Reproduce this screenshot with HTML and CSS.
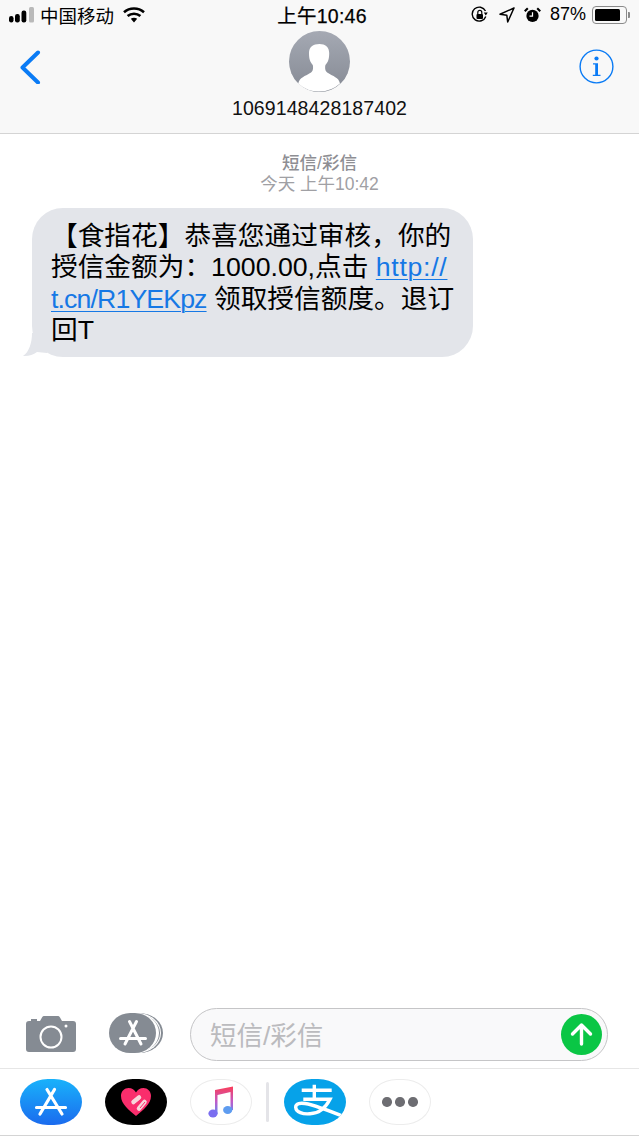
FILE: index.html
```html
<!DOCTYPE html>
<html lang="zh">
<head>
<meta charset="utf-8">
<title>短信/彩信</title>
<link rel="stylesheet" href="styles.css">
</head>
<body>
<div class="screen">
  <header class="top">
    <div class="status">
      <div class="status-left">
        <svg class="signal" width="25" height="16" viewBox="0 0 25 16"><rect x="0" y="9" width="4.500" height="6.500" rx="2.200" fill="#000"/><rect x="6" y="7" width="4.800" height="8.500" rx="2.200" fill="#000"/><rect x="12.500" y="3.500" width="4.800" height="12" rx="2.200" fill="#000"/><rect x="20" y="0" width="5" height="15.500" rx="1.500" fill="#b9b9b9"/></svg>
        <span class="carrier">中国移动</span>
        <svg class="wifi" width="22" height="16" viewBox="0 0 22 16"><path d="M1 5.200C6.600.3 15.400.3 21 5.200" fill="none" stroke="#000" stroke-width="2.600"/><path d="M4.600 9C8.300 5.900 13.700 5.900 17.400 9" fill="none" stroke="#000" stroke-width="2.600"/><path d="M7.800 11.800 11 15.500l3.200-3.700c-1.900-1.400-4.500-1.400-6.400 0z" fill="#000"/></svg>
      </div>
      <div class="clock">上午10:46</div>
      <div class="status-right">
        <svg width="18" height="18" viewBox="0 0 18 18"><path d="M14.800 10.500A7 7 0 1 1 14.500 5" fill="none" stroke="#000" stroke-width="1.400"/><path d="M12.800 6.500h4L14.800 9.500z" fill="#000"/><rect x="5.500" y="8" width="6.500" height="5" rx="1" fill="#000"/><path d="M6.800 8V6.400a2 2 0 0 1 4 0V8" fill="none" stroke="#000" stroke-width="1.200"/></svg>
        <svg class="loc" width="16" height="16" viewBox="0 0 16 16"><path d="M15 1 1 7.300 7.800 8.200 8.700 15z" fill="none" stroke="#000" stroke-width="1.500" stroke-linejoin="round"/></svg>
        <svg class="alarm" width="17" height="18" viewBox="0 0 18 18"><circle cx="9" cy="10" r="6.500" fill="#000"/><path d="M9 6v4.300H5.800" fill="none" stroke="#fff" stroke-width="1.300"/><path d="M.8 5 4 1.800M17.200 5 14 1.800" stroke="#000" stroke-width="2.200"/></svg>
        <span class="percent">87%</span>
        <div class="battery"><div class="battery-fill"></div></div>
        <div class="battery-tip"></div>
      </div>
    </div>
    <div class="nav">
      <svg class="back" width="22" height="34" viewBox="0 0 22 34"><path d="M19 2.500 3.500 17.500 19 32.500" fill="none" stroke="#0a7bf5" stroke-width="4" stroke-linecap="round" stroke-linejoin="round"/></svg>
      <div class="contact">
        <svg class="avatar" width="61" height="61" viewBox="0 0 61 61">
          <defs><linearGradient id="ag" x1="0" y1="0" x2="0" y2="1"><stop offset="0" stop-color="#a5a9b3"/><stop offset="1" stop-color="#858a94"/></linearGradient></defs>
          <circle cx="30.500" cy="30.500" r="30.500" fill="url(#ag)"/>
          <path d="M30.500 13c-6.500 0-10.500 3-10.500 9 0 3.500.3 5.500 1 7.500.5 1.700 1.700 3 2.800 4.500.5 2 .4 5-.8 6.500-2 2.500-9 4.500-12 8-.8 1-1.300 2.300-1.800 4A30.500 30.500 0 0 0 30.500 60.500 30.500 30.500 0 0 0 51 52.500c-.5-1.700-1-3-1.800-4-3-3.500-10-5.500-12-8-1.200-1.500-1.300-4.500-.8-6.500 1.100-1.500 2.300-2.800 2.800-4.500.7-2 1-4 1-7.500 0-6-4-9-9.700-9z" fill="#fff"/>
        </svg>
        <div class="number">1069148428187402</div>
      </div>
      <svg class="info" width="35" height="35" viewBox="0 0 35 35"><circle cx="17.500" cy="17.500" r="16.400" fill="none" stroke="#0a7bf5" stroke-width="1.400"/><circle cx="17.500" cy="9.500" r="2.100" fill="#0a7bf5"/><path d="M14 14.300h5v11.500h2.500v1.200h-7.700v-1.200h2.400V15.500H14z" fill="#0a7bf5"/></svg>
    </div>
  </header>

  <main class="thread">
    <div class="meta">
      <div class="meta-type">短信/彩信</div>
      <div class="meta-time">今天 上午10:42</div>
    </div>
    <div class="bubble">
      <svg class="tail" width="24" height="24" viewBox="0 0 24 24"><path d="M9 0C9 10 6 19 0 23 5 23.500 10 22 14 19L24 20V0z" fill="#e3e5ea"/></svg>
      <p class="msg">【食指花】恭喜您通过审核，你的<br>授信金额为：1000.00,点击 <a class="link" href="#"><span class="link-top">http://</span><br><span class="link-tail">t.cn/R1YEKpz</span></a> 领取授信额度。退订<br>回T</p>
    </div>
  </main>

  <section class="composer">
    <svg class="cam" width="50" height="38" viewBox="0 0 50 38"><path d="M5 4h6v2H5z" fill="#858b93"/><path d="M3 6h11l2-3.500C16.600 1.400 17.500 1 18.500 1h13c1 0 1.900.4 2.500 1.500L36 6h11c2 0 3 1 3 3v25c0 2-1 3-3 3H3c-2 0-3-1-3-3V9c0-2 1-3 3-3z" fill="#858b93"/><circle cx="25" cy="22" r="10.500" fill="none" stroke="#fff" stroke-width="2"/><circle cx="40" cy="11" r="1.500" fill="#fff"/></svg>
    <div class="apps-btn">
      <div class="apps-ring"></div>
      <div class="apps-ring gap"></div>
      <div class="apps-ring thin"></div>
      <div class="apps-ring gap inner"></div>
      <div class="pill grey">
        <svg width="30" height="28" viewBox="0 0 30 28"><path d="M18.500 2.500 7 25M11.500 2.500 23 25M2.500 19.500H27.500" fill="none" stroke="#fff" stroke-width="3" stroke-linecap="round"/></svg>
      </div>
    </div>
    <div class="input">
      <span class="placeholder">短信/彩信</span>
      <svg class="send" width="41" height="41" viewBox="0 0 41 41"><circle cx="20.500" cy="20.500" r="20.500" fill="#0ac645"/><path d="M20.500 30V11M11.500 20l9-9 9 9" fill="none" stroke="#fff" stroke-width="3.400" stroke-linecap="round" stroke-linejoin="round"/></svg>
    </div>
  </section>

  <nav class="tray">
    <div class="pill blue">
      <svg width="34" height="31" viewBox="0 0 34 31"><path d="M20.500 2.500 6 27M13 2.500 28 27M2.500 20.500H31.500" fill="none" stroke="#fff" stroke-width="3.200" stroke-linecap="round"/></svg>
    </div>
    <div class="pill black">
      <svg width="32" height="30" viewBox="0 0 32 30"><path d="M16 29C9 23 1 17 1 9c0-5 3.600-8 7.500-8C12 1 14.600 3 16 5.500 17.400 3 20 1 23.500 1 27.400 1 31 4 31 9c0 8-8 14-15 20z" fill="#fa2d6c"/><path d="M13.500 15 19 10.500M19 21.500 24.500 15" stroke="#f7d5da" stroke-width="4.500" stroke-linecap="round"/><path d="M15 17.500l6-5M20 21l5-6" stroke="#fa2d6c" stroke-width="1"/></svg>
    </div>
    <div class="pill outline">
      <svg width="26" height="32" viewBox="0 0 26 32">
        <defs><linearGradient id="mg" x1="0" y1="0" x2="0" y2="1"><stop offset="0" stop-color="#fb3d58"/><stop offset=".55" stop-color="#c05bc8"/><stop offset="1" stop-color="#5e8cf2"/></linearGradient></defs>
        <path d="M7 4 25 .5V24H22.500V6L9.500 9V28H7z" fill="url(#mg)"/><ellipse cx="5" cy="27.500" rx="4.600" ry="4" fill="#7a6ef0"/><ellipse cx="19.700" cy="24" rx="4.600" ry="4" fill="#5e9cf0"/>
      </svg>
    </div>
    <div class="divider"></div>
    <div class="pill alipay">
      <svg width="62" height="46" viewBox="0 0 62 46">
        <path d="M17.700 11.300H47.700M30.300 5.700V20.300M19.300 20.300H46C42 28 35 34.700 26 34.700 19 35.500 12 33 11.700 28.300 11.500 24 17 23.800 21 24.500 30 26 46 32 62 38.500" fill="none" stroke="#fff" stroke-width="3.400"/>
      </svg>
    </div>
    <div class="pill outline dots"><i></i><i></i><i></i></div>
  </nav>
</div>
</body>
</html>
```

FILE: styles.css
```css
* { box-sizing: border-box; }
html, body { margin: 0; padding: 0; }
body { font-family: "Liberation Sans", "Noto Sans CJK SC", sans-serif; background: #fff; color: #000; }
.screen { width: 639px; height: 1136px; display: flex; flex-direction: column; overflow: hidden; }

.top { height: 134px; background: #f8f8f8; border-bottom: 1px solid #d4d4d4; flex: none; }
.status { height: 31px; display: flex; align-items: center; justify-content: space-between; padding: 0 9px 2px 9px; position: relative; font-size: 18px; }
.status-left { display: flex; align-items: center; gap: 6px; }
.carrier { font-size: 18.500px; margin-right: 3px; }
.clock { position: absolute; left: 5px; right: 0; top: 3px; text-align: center; font-size: 19.500px; line-height: 26px; letter-spacing: .25px; -webkit-text-stroke: .25px #000; }
.status-right { display: flex; align-items: center; }
.status-right .loc { margin-left: 10px; }
.status-right .alarm { margin-left: 9px; }
.percent { margin-left: 9px; font-size: 18px; margin-right: 6px; }
.battery { width: 35px; height: 18px; border: 1px solid #8a8a8a; border-radius: 4px; padding: 2px; }
.battery-fill { width: 87%; height: 100%; background: #000; border-radius: 1.500px; }
.battery-tip { width: 2px; height: 6px; background: #8a8a8a; margin-left: 1px; border-radius: 0 1px 1px 0; }

.nav { display: grid; grid-template-columns: 1fr auto 1fr; align-items: start; padding: 0 19px; }
.back { margin-top: 19px; justify-self: start; }
.info { margin: 18px 6px 0 0; justify-self: end; }
.contact { display: flex; flex-direction: column; align-items: center; }
.avatar { display: block; }
.number { font-size: 19.500px; line-height: 24px; margin-top: 4px; letter-spacing: .1px; color: #111; }

.thread { flex: 1; min-height: 0; background: #fff; }
.meta { text-align: center; color: #8e8e93; font-size: 17.500px; line-height: 21px; padding-top: 19px; }
.meta-type { font-weight: 500; }
.meta-time { color: #a0a0a4; }
.bubble { position: relative; width: 441px; height: 149px; margin: 13px 0 0 32px; background: #e3e5ea; border-radius: 31px; padding: 13px 0 0 19px; }
.tail { position: absolute; left: -9px; bottom: 0; }
.msg { position: relative; margin: 0; font-size: 26.700px; line-height: 31.300px; white-space: nowrap; }
.link { color: #1678e5; text-decoration: underline; text-decoration-thickness: 1px; text-underline-offset: 3px; }
.link-top { letter-spacing: .7px; }
.link-tail { letter-spacing: -.88px; }

.composer { flex: none; height: 61px; display: flex; align-items: flex-start; position: relative; }
.cam { margin: 8px 0 0 26px; flex: none; }
.apps-btn { position: relative; width: 55px; height: 40px; margin: 6px 0 0 33px; flex: none; }
.apps-ring { position: absolute; left: 6px; top: 0; width: 48px; height: 40px; border-radius: 50%; background: #858b93; }
.apps-ring.gap { left: 3.500px; background: #fff; }
.apps-ring.thin { left: 2.500px; top: 1px; height: 38px; }
.apps-ring.gap.inner { left: 1.500px; }
.input { position: absolute; left: 190px; top: 1px; width: 418px; height: 53px; border: 1.500px solid #c5c5c7; border-radius: 27px; background: #f9f9fa; display: flex; align-items: center; justify-content: space-between; padding: 0 5px 0 19px; }
.placeholder { color: #bbbbbe; font-size: 26.500px; padding-bottom: 2px; }

.tray { flex: none; height: 68px; border-top: 1px solid #e6e6e6; border-bottom: 1px solid #d4d4d4; display: flex; align-items: center; padding: 0 0 0 20px; }
.pill { width: 62px; height: 46px; border-radius: 45% / 50%; display: flex; align-items: center; justify-content: center; flex: none; margin-right: 23px; overflow: hidden; }
.apps-btn .pill { position: absolute; left: 0; top: 0; width: 47px; height: 40px; margin: 0; }
.pill.grey { background: #858b93; }
.pill.blue { background: linear-gradient(#19b2fb, #1b6bee); }
.pill.black { background: #000; }
.pill.outline { background: #fff; border: 1px solid #ececec; }
.pill.alipay { background: #06a2e9; }
.divider { width: 3px; height: 40px; background: #e4e4e8; border-radius: 1.500px; margin: 0 15px 0 -9px; flex: none; }
.dots { gap: 3.500px; }
.dots i { width: 9.500px; height: 9.500px; border-radius: 50%; background: #6d6d72; display: block; }
```
